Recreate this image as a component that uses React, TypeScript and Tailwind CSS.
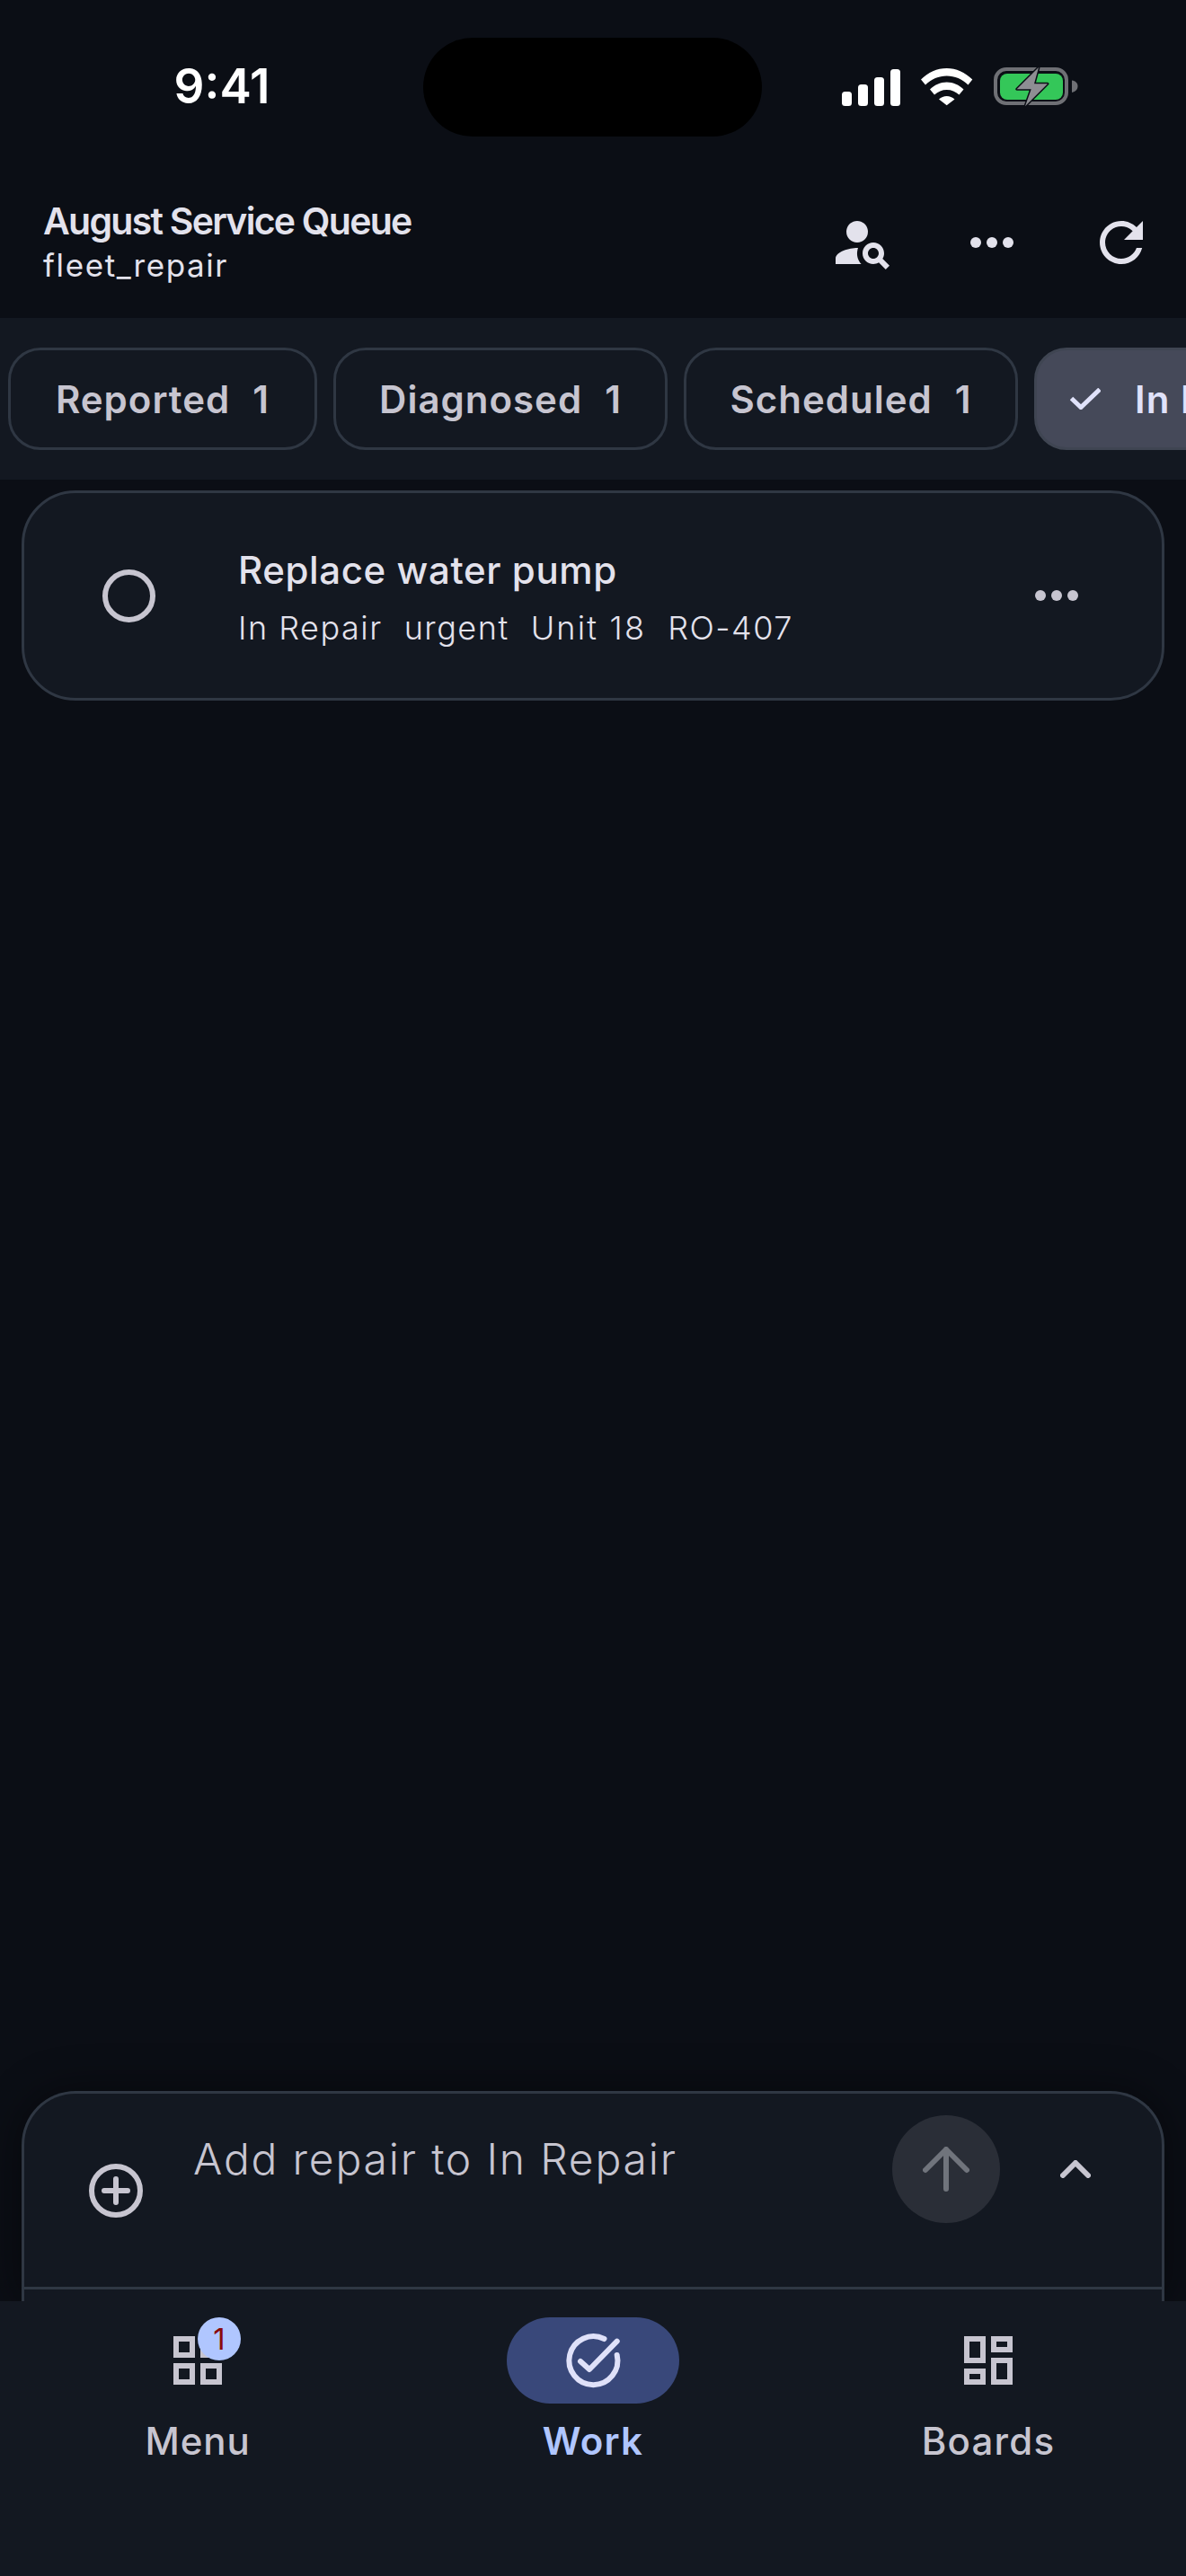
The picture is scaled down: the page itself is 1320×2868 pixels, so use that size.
import React from 'react';

const filters = [
  { label: 'Reported', count: 1, width: 'w-[344px]' },
  { label: 'Diagnosed', count: 1, width: 'w-[372px]' },
  { label: 'Scheduled', count: 1, width: 'w-[372px]' },
];

function StatusIcons() {
  return (
    <div className="flex items-center pl-[89px]">
      {/* signal */}
      <svg width="65" height="41" viewBox="0 0 65 41" fill="#fff">
        <rect x="0" y="25" width="11" height="16" rx="3.5" />
        <rect x="18" y="17" width="11" height="24" rx="3.5" />
        <rect x="36" y="9" width="11" height="32" rx="3.5" />
        <rect x="54" y="0" width="11" height="41" rx="3.5" />
      </svg>
      {/* wifi */}
      <svg className="ml-[23px]" width="58" height="42" viewBox="0 0 58 42" fill="#fff">
        <path d="M0 12.5C8 4.5 18 0 28.7 0C39 0 49 4.5 57.3 12.5L52.5 18.5C46 12 37.5 8.5 28.7 8.5C20 8.5 11.5 12 5 18.5Z" />
        <path d="M10 23.5C15 18.5 21.5 15.5 28.7 15.5C36 15.5 42.5 18.5 47.5 23.5L42.5 29.5C38.5 26 34 24 28.7 24C23.5 24 19 26 15 29.5Z" />
        <path d="M20 34.5C22.5 32.3 25.5 31 28.7 31C32 31 35 32.3 37.5 34.5L28.7 41.3Z" />
      </svg>
      {/* charging battery */}
      <svg className="ml-[23px] overflow-visible" width="94" height="44" viewBox="0 0 94 44" fill="none">
        <rect x="2" y="2" width="79" height="38" rx="12" stroke="#6f7075" strokeWidth="4" />
        <rect x="7" y="7" width="70" height="29" rx="8" fill="#34c759" />
        <path d="M87 14.5C91 15 93.5 17.5 93.5 21C93.5 24.5 91 27 87 28Z" fill="#6f7075" />
        <path
          d="M50 0L25.7 24.3H41.7L35 43.3L60 18.3H45Z"
          fill="#8e8e93"
          stroke="#0b0e15"
          strokeWidth="3"
          strokeLinejoin="round"
          paintOrder="stroke"
        />
      </svg>
    </div>
  );
}

function Header() {
  return (
    <div className="flex h-[144px] items-center justify-between pl-[48px]">
      <div className="mt-[-3px] flex flex-col">
        <div className="text-[41px] leading-[52px] font-semibold tracking-[-1.75px] text-[#e3e2ec]">
          August Service Queue
        </div>
        <div className="mt-[1px] text-[35px] leading-[44px] tracking-[1.6px] text-[#e3e2ec]">
          fleet_repair
        </div>
      </div>
      <div className="flex">
        <button className="flex h-[144px] w-[144px] items-center justify-center">
          <svg width="72" height="72" viewBox="0 0 24 24" fill="#e3e2ec">
            <path d="M10 12c2.21 0 4-1.79 4-4s-1.79-4-4-4-4 1.79-4 4 1.79 4 4 4z" />
            <path d="M10.35 14.01C7.62 13.91 2 15.27 2 18v2h9.54c-2.47-2.76-1.23-5.89-1.19-5.99z" />
            <path d="M19.43 18.02c.36-.59.57-1.28.57-2.02 0-2.21-1.79-4-4-4s-4 1.79-4 4 1.79 4 4 4c.74 0 1.43-.22 2.02-.57L20.59 22 22 20.59l-2.57-2.57zM16 18c-1.1 0-2-.9-2-2s.9-2 2-2 2 .9 2 2-.9 2-2 2z" />
          </svg>
        </button>
        <button className="flex h-[144px] w-[144px] items-center justify-center">
          <Dots color="#e3e2ec" />
        </button>
        <button className="flex h-[144px] w-[144px] items-center justify-center">
          <svg width="72" height="72" viewBox="0 0 24 24" fill="#e3e2ec">
            <path d="M17.65 6.35C16.2 4.9 14.21 4 12 4c-4.42 0-7.99 3.58-7.99 8s3.57 8 7.99 8c3.73 0 6.84-2.55 7.73-6h-2.08c-.82 2.33-3.04 4-5.65 4-3.31 0-6-2.69-6-6s2.69-6 6-6c1.66 0 3.14.69 4.22 1.78L13 11h7V4l-2.35 2.35z" />
          </svg>
        </button>
      </div>
    </div>
  );
}

function Dots({ color }: { color: string }) {
  return (
    <svg width="48" height="12" viewBox="0 0 48 12" fill={color}>
      <circle cx="6" cy="6" r="6" />
      <circle cx="24" cy="6" r="6" />
      <circle cx="42" cy="6" r="6" />
    </svg>
  );
}

function FilterChips() {
  return (
    <div className="mt-[12px] flex h-[180px] items-center gap-[18px] overflow-hidden bg-[#131821] pl-[9px]">
      {filters.map((f) => (
        <div
          key={f.label}
          className={`flex h-[114px] shrink-0 items-center justify-center rounded-[36px] border-[3px] border-[#2f3743] text-[42px] font-semibold tracking-[1px] text-[#c7c5d0] ${f.width}`}
        >
          {f.label}
          <span className="ml-[25px]">{f.count}</span>
        </div>
      ))}
      <div className="flex h-[114px] shrink-0 items-center rounded-[36px] border-[3px] border-[#3f4552] bg-[#454959] pr-[50px] pl-[37px] text-[42px] font-semibold tracking-[1px] text-[#e0e2fa]">
        <svg className="mr-[38px]" width="34" height="24" viewBox="0 0 34 24" fill="none" stroke="#e0e2fa" strokeWidth="5">
          <path d="M1.5 11.5L12 21.5L33 1.5" />
        </svg>
        In Repair
        <span className="ml-[25px]">1</span>
      </div>
    </div>
  );
}

function RepairCard() {
  return (
    <div className="mx-[24px] mt-[12px] flex h-[234px] items-center rounded-[60px] border-[3px] border-[#2f3743] bg-[#131821]">
      <div className="ml-[87px] h-[59px] w-[59px] shrink-0 rounded-full border-[6px] border-[#c7c5d0]" />
      <div className="mt-[4px] ml-[92px] flex flex-1 flex-col">
        <div className="mt-[-2px] text-[42px] leading-[60px] font-medium tracking-[0.6px] text-[#e3e2ec]">
          Replace water pump
        </div>
        <div className="mt-[10px] flex gap-[24px] text-[36px] leading-[48px] font-light tracking-[1.5px] text-[#e3e2ec]">
          <span>In Repair</span>
          <span>urgent</span>
          <span className="tracking-[2.2px]">Unit 18</span>
          <span>RO-407</span>
        </div>
      </div>
      <div className="mr-[93px] shrink-0">
        <Dots color="#c7c5d0" />
      </div>
    </div>
  );
}

function Composer() {
  return (
    <div className="mx-[24px] h-[234px] shrink-0 overflow-hidden rounded-t-[60px] border-x-[3px] border-t-[3px] border-[#2f3743] bg-[#131821] shadow-[0_0_48px_rgba(0,0,0,0.45)]">
      <div className="flex h-[218px] items-start border-b-[3px] border-[#2f3743]">
        <svg className="mt-[78px] ml-[72px] shrink-0" width="60" height="60" viewBox="0 0 60 60" fill="none" stroke="#c7c5d0" strokeWidth="6" strokeLinecap="round">
          <circle cx="30" cy="30" r="27" />
          <path d="M30 17V43M17 30H43" />
        </svg>
        <div className="mt-[41px] ml-[56px] flex-1 text-[48px] leading-[64px] font-light tracking-[1.8px] text-[#c7c5d0]">
          Add repair to In Repair
        </div>
        <button className="mt-[24px] flex h-[120px] w-[120px] shrink-0 items-center justify-center rounded-full bg-[#2a2e37]">
          <svg width="52" height="50" viewBox="0 0 52 50" fill="none" stroke="#70747c" strokeWidth="6" strokeLinecap="round" strokeLinejoin="round">
            <path d="M26 3V47M3 26L26 3L49 26" />
          </svg>
        </button>
        <button className="mt-[24px] mr-[60px] ml-[48px] flex h-[120px] w-[72px] shrink-0 items-center justify-center">
          <svg width="34" height="20" viewBox="0 0 34 20" fill="none" stroke="#c7c5d0" strokeWidth="6" strokeLinecap="round" strokeLinejoin="round">
            <path d="M3 17L17 3L31 17" />
          </svg>
        </button>
      </div>
    </div>
  );
}

function BottomNav() {
  return (
    <nav className="relative z-10 grid h-[306px] shrink-0 grid-cols-3 bg-[#131821] pt-[18px]">
      <div className="flex flex-col items-center">
        <div className="flex h-[96px] w-[192px] items-center justify-center">
          <div className="relative h-[72px] w-[72px]">
            <svg width="72" height="72" viewBox="0 0 24 24" fill="#c7c5d0">
              <path d="M3 3v8h8V3H3zm6 6H5V5h4v4zm-6 4v8h8v-8H3zm6 6H5v-4h4v4zm4-16v8h8V3h-8zm6 6h-4V5h4v4zm-6 4v8h8v-8h-8zm6 6h-4v-4h4v4z" />
            </svg>
            <span className="absolute top-[-12px] left-[36px] flex h-[48px] w-[48px] items-center justify-center rounded-full bg-[#b0c6ff] text-[33px] leading-none text-[#8a0a0a]">
              1
            </span>
          </div>
        </div>
        <span className="mt-[12px] text-[42px] leading-[60px] font-medium tracking-[0.9px] text-[#c7c5d0]">Menu</span>
      </div>
      <div className="flex flex-col items-center">
        <div className="flex h-[96px] w-[192px] items-center justify-center rounded-full bg-[#39487a]">
          <svg width="72" height="72" viewBox="0 0 72 72" fill="none" stroke="#dfe1f9" strokeWidth="6" strokeLinecap="round" strokeLinejoin="round">
            <path d="M62.7 30A27 27 0 1 1 48.5 12" />
            <path d="M22 37L32 46L62.7 14.7" />
          </svg>
        </div>
        <span className="mt-[12px] text-[42px] leading-[60px] font-semibold tracking-[1.2px] text-[#b0c6ff]">Work</span>
      </div>
      <div className="flex flex-col items-center">
        <div className="flex h-[96px] w-[192px] items-center justify-center">
          <svg width="72" height="72" viewBox="0 0 24 24" fill="#c7c5d0">
            <path d="M19 5v2h-4V5h4M9 5v6H5V5h4m10 8v6h-4v-6h4M9 17v2H5v-2h4M21 3h-8v6h8V3zM11 3H3v10h8V3zm10 8h-8v10h8V11zm-10 4H3v6h8v-6z" />
          </svg>
        </div>
        <span className="mt-[12px] text-[42px] leading-[60px] font-medium tracking-[1.2px] text-[#c7c5d0]">Boards</span>
      </div>
    </nav>
  );
}

export default function App() {
  return (
    <div className="flex h-[2868px] w-[1320px] flex-col overflow-hidden bg-[#0b0e15] font-['Inter',sans-serif]">
      {/* status bar */}
      <div className="flex h-[198px] shrink-0 items-start pt-[42px]">
        <div className="flex h-[110px] w-[471px] items-center justify-center pl-[23px] text-[53px] font-semibold text-white">
          9:41
        </div>
        <div className="h-[110px] w-[377px] rounded-full bg-black" />
        <div className="flex h-[110px] items-center">
          <StatusIcons />
        </div>
      </div>
      <Header />
      <FilterChips />
      <div className="flex-1">
        <RepairCard />
      </div>
      <Composer />
      <BottomNav />
    </div>
  );
}
